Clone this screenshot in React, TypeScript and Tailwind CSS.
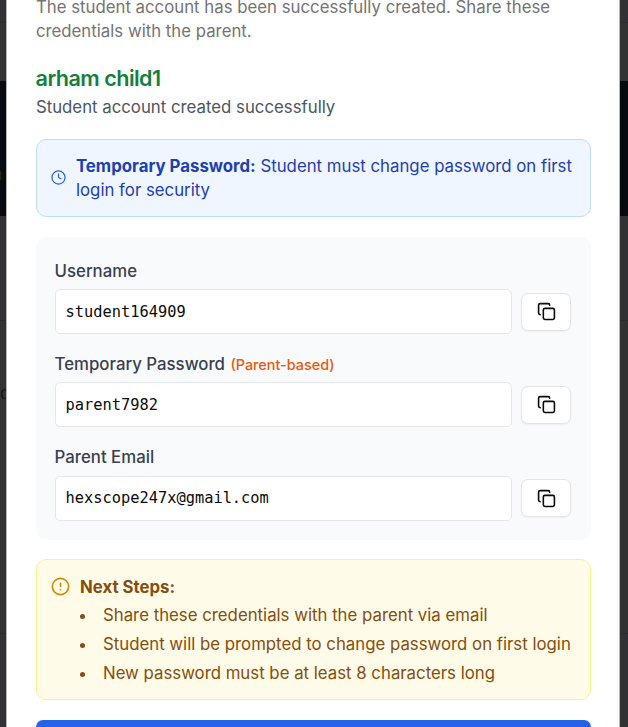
import type { ReactNode } from "react";

function ClockIcon() {
  return (
    <svg className="-mt-px size-[15px] shrink-0 text-[#2563eb]" viewBox="0 0 24 24" fill="none" stroke="currentColor" strokeWidth="2" strokeLinecap="round" strokeLinejoin="round">
      <circle cx="12" cy="12" r="10.5" />
      <path d="M12 6v6l4 2" />
    </svg>
  );
}

function AlertIcon() {
  return (
    <svg className="mt-[2px] size-[19px] shrink-0 text-[#ca8a04]" viewBox="0 0 24 24" fill="none" stroke="currentColor" strokeWidth="2" strokeLinecap="round" strokeLinejoin="round">
      <circle cx="12" cy="12" r="10.3" />
      <path d="M12 8v4M12 16h.01" />
    </svg>
  );
}

function CopyIcon() {
  return (
    <svg className="ml-px size-[19px]" viewBox="0 0 24 24" fill="none" stroke="currentColor" strokeWidth="2" strokeLinecap="round" strokeLinejoin="round">
      <rect x="8" y="8" width="14" height="14" rx="2" />
      <path d="M4 16c-1.1 0-2-.9-2-2V4c0-1.1.9-2 2-2h10c1.1 0 2 .9 2 2" />
    </svg>
  );
}

function Field({ label, value }: { label: ReactNode; value: string }) {
  return (
    <div className="h-[93.3px]">
      <div className="h-[33px] pt-[2.8px] text-[16.8px] leading-6 font-medium text-[#374151]">{label}</div>
      <div className="flex items-center gap-[9px]">
        <code className="flex h-[45px] w-[457px] items-center rounded-[5px] border border-[#e5e7eb] bg-white px-2.5 pt-[1.5px] font-['DejaVu_Sans_Mono',monospace] text-[15.35px] text-[#0a0a0a]">
          {value}
        </code>
        <button className="flex h-[38px] w-[50px] items-center justify-center rounded-[7px] border border-[#e5e5e5] bg-white text-[#0a0a0a] shadow-xs">
          <CopyIcon />
        </button>
      </div>
    </div>
  );
}

function BackdropStrip() {
  return (
    <div className="flex flex-1 flex-col overflow-hidden bg-[#323234]">
      <div className="h-[23px] border-b border-[#2c2c2d]" />
      <div className="h-[58px] bg-[#333333]" />
      <div className="h-[135px] bg-[#070b0f]" />
      <div className="h-[105px] border-b border-[#2b2b2b]" />
      <div className="h-[313px] border-b border-[#2b2b2b] bg-[#323232]" />
    </div>
  );
}

export default function App() {
  return (
    <div className="relative flex h-[727px] w-[628px] overflow-hidden bg-[#323234] font-[Inter,sans-serif]">
      <div className="flex w-[6px] shrink-0">
        <BackdropStrip />
      </div>
      <span className="absolute top-[162px] left-[-8px] text-[17px] leading-6 font-semibold text-[#2b2119]">n</span>
      <span className="absolute top-[381px] left-0 text-[17px] leading-6 text-[#151515]">d</span>
      <main className="relative flex h-[727px] w-[614px] shrink-0 flex-col overflow-hidden border-x border-[#b5b5b5] bg-white pr-[29px] pl-[28.6px]">
        <p className="-mt-[5px] w-[540px] shrink-0 pl-[0.3px] text-[16.8px] leading-6 text-[#737373]">
          The student account has been successfully created. Share these credentials with the parent.
        </p>
        <h3 className="mt-[21px] shrink-0 text-[21.6px] leading-[29px] font-semibold tracking-tight text-[#15803d]">arham child1</h3>
        <p className="mt-[2px] shrink-0 pl-[0.3px] text-[16.8px] leading-6 text-[#4b5563]">Student account created successfully</p>

        <section className="mt-5 flex h-[78px] w-[555px] shrink-0 items-center gap-[10.4px] rounded-[10px] border border-[#bfdbfe] bg-[#eff6ff] pl-[14px] text-[16.8px] leading-6 text-[#1e40af]">
          <ClockIcon />
          <p className="w-[505px]">
            <strong className="font-bold">Temporary Password:</strong> Student must change password on first login for security
          </p>
        </section>

        <section className="mt-5 h-[303px] w-[555px] shrink-0 rounded-[10px] bg-[#f9fafb] px-[19px] pt-[19px]">
          <Field label="Username" value="student164909" />
          <Field
            label={<>Temporary Password <span className="ml-px text-[14.4px] text-[#ea580c]">(Parent-based)</span></>}
            value="parent7982"
          />
          <Field label="Parent Email" value="hexscope247x@gmail.com" />
        </section>

        <section className="mt-[19px] flex h-[141px] w-[555px] shrink-0 gap-[10.4px] rounded-[10px] border border-[#fff085] bg-[#fefce8] pt-[15px] pl-[14px] text-[16.8px] leading-6 text-[#854d0e]">
          <AlertIcon />
          <div>
            <strong className="block font-bold">Next Steps:</strong>
            <ul className="mt-[4px] space-y-[5px]">
              {[
                "Share these credentials with the parent via email",
                "Student will be prompted to change password on first login",
                "New password must be at least 8 characters long",
              ].map((step) => (
                <li key={step} className="flex items-center gap-[18px] whitespace-nowrap">
                  <span className="mt-[2px] size-[5px] shrink-0 rounded-full bg-[#854d0e]" />
                  {step}
                </li>
              ))}
            </ul>
          </div>
        </section>

        <button className="mt-5 h-[43px] w-[555px] shrink-0 rounded-[7px] bg-[#2563eb]" aria-label="Done" />
      </main>
      <BackdropStrip />
    </div>
  );
}
